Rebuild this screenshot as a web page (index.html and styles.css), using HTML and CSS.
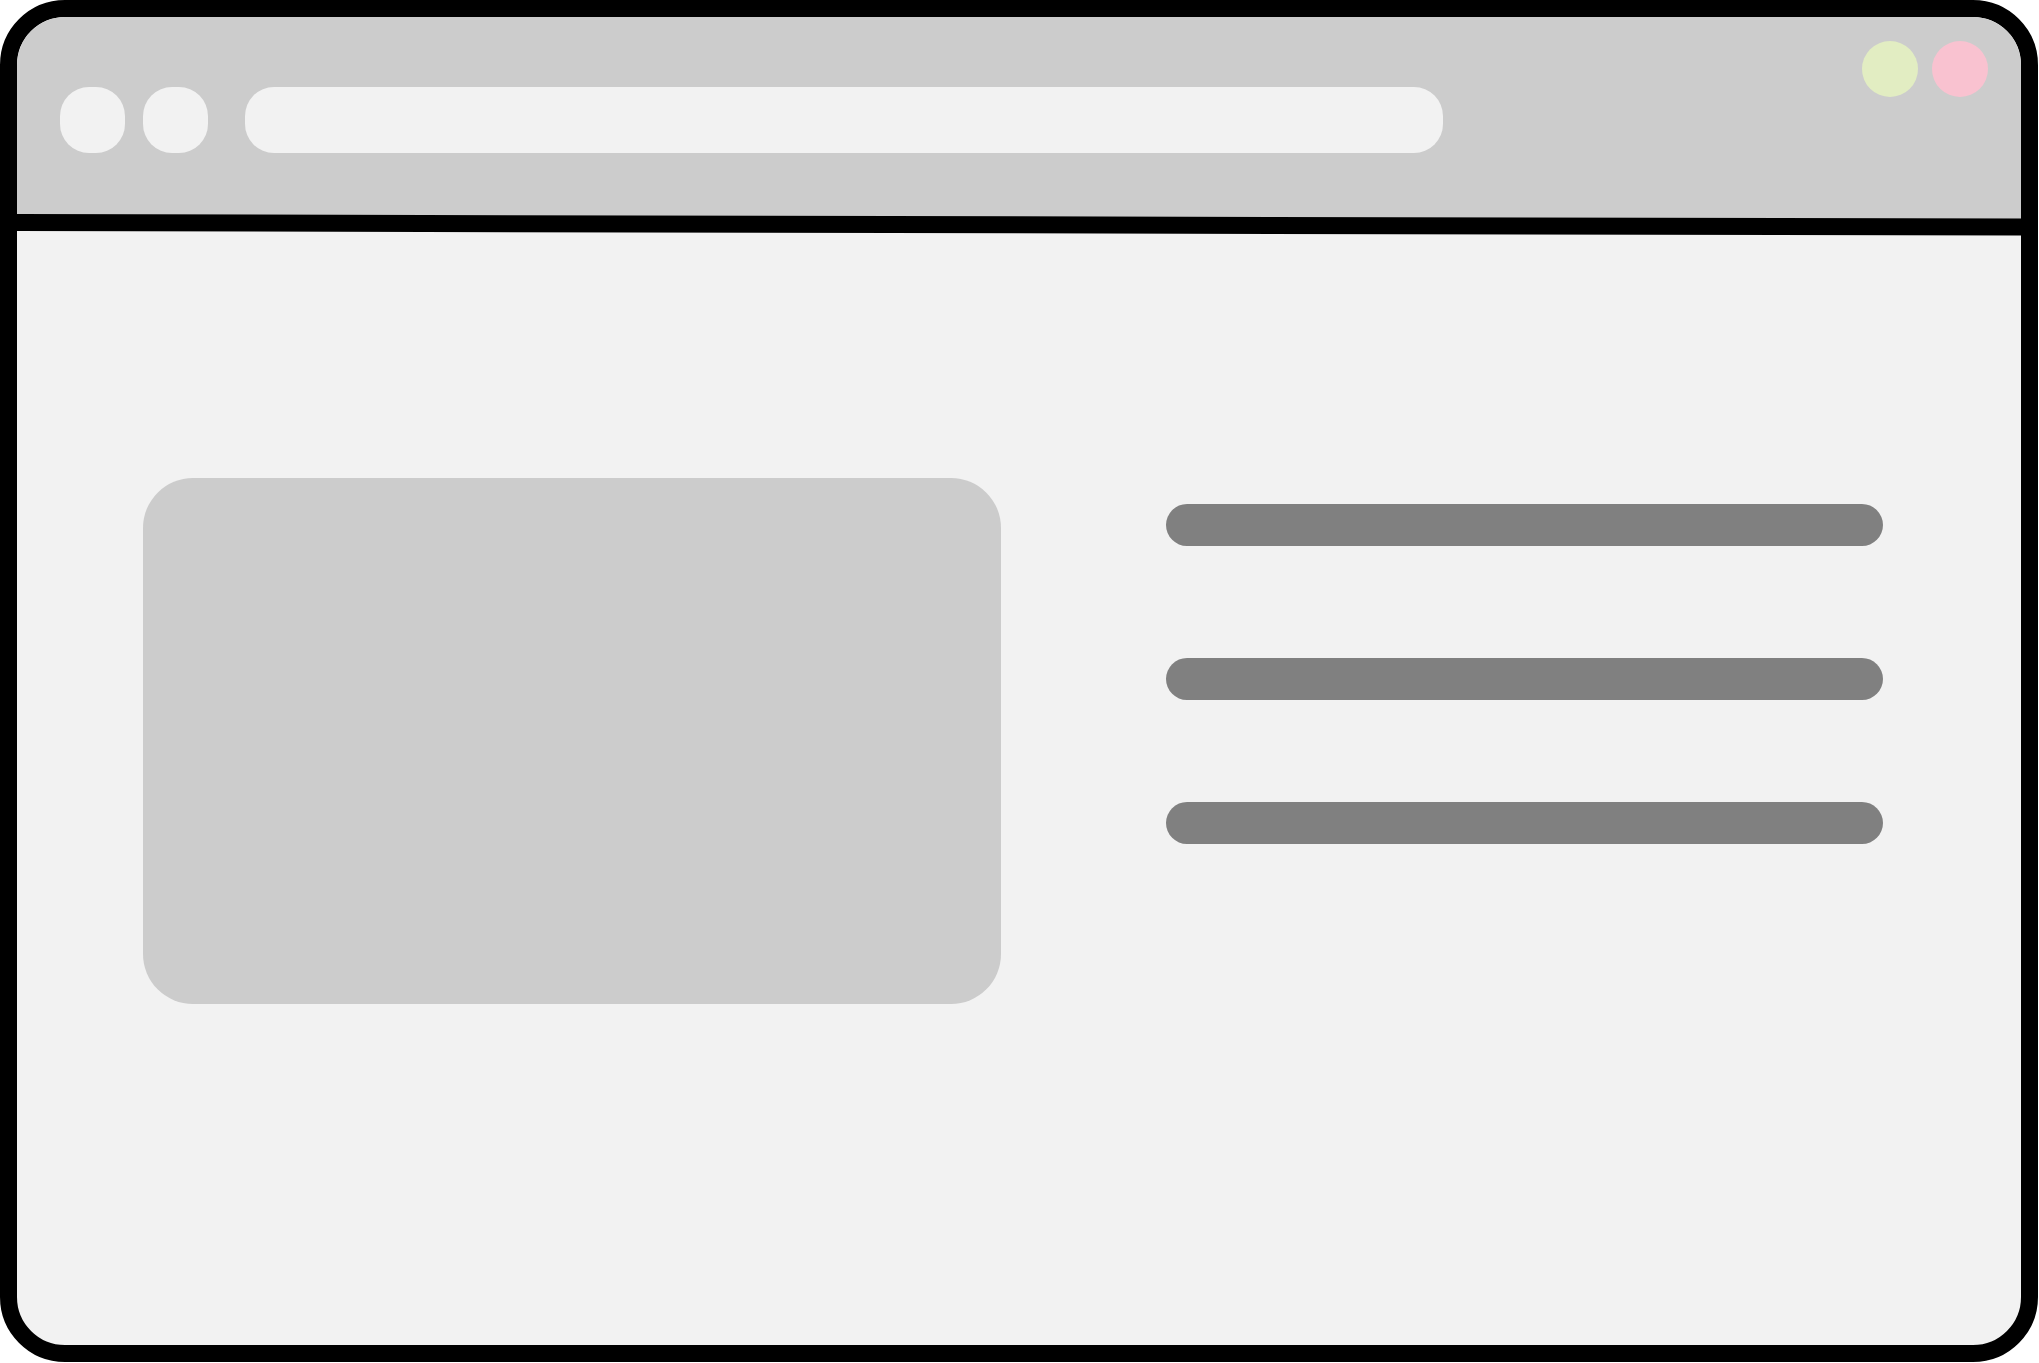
FILE: index.html
```html
<!DOCTYPE html>
<html lang="en">
<head>
  <meta charset="utf-8">
  <meta name="viewport" content="width=device-width, initial-scale=1">
  <link rel="stylesheet" href="styles.css">
</head>
<body>
  <div class="window">
    <header class="toolbar">
      <nav class="history">
        <button class="nav-button" type="button" aria-label="Back"></button>
        <button class="nav-button" type="button" aria-label="Forward"></button>
      </nav>
      <input class="address" type="text" aria-label="Address">
      <div class="controls">
        <button class="control control-minimize" type="button" aria-label="Minimize"></button>
        <button class="control control-close" type="button" aria-label="Close"></button>
      </div>
    </header>
    <svg class="divider" viewBox="0 0 2004 22" preserveAspectRatio="none" aria-hidden="true">
      <path class="divider-above" d="M0 0H2004V12H0Z"/>
      <path d="M0 0L2004 4.6V21.6L0 17Z"/>
    </svg>
    <main class="content">
      <div class="picture"></div>
      <div class="lines">
        <div class="line line-lead"></div>
        <div class="line"></div>
        <div class="line"></div>
      </div>
    </main>
  </div>
</body>
</html>
```

FILE: styles.css
```css
* {
  box-sizing: border-box;
}

body {
  display: flex;
  min-height: 100vh;
  margin: 0;
  padding: 0 1px 1px 0;
  background: #fff;
  font-family: "Liberation Sans", sans-serif;
}

.window {
  display: flex;
  flex: 1;
  flex-direction: column;
  overflow: hidden;
  border: 17px solid #000;
  border-radius: 65px;
  background: #f2f2f2;
}

.toolbar {
  display: flex;
  align-items: flex-start;
  padding: 24px 33px 61px 43px;
  background: #ccc;
}

.history {
  display: flex;
  gap: 18px;
  padding: 46px 37px 0 0;
}

.nav-button,
.address {
  height: 66px;
  padding: 0;
  border: 0;
  border-radius: 29px;
  background: #f2f2f2;
}

.nav-button {
  width: 65px;
}

.address {
  flex: 1197 1 0;
  min-width: 0;
  margin-top: 46px;
  font: 28px "Liberation Sans", sans-serif;
  text-indent: 28px;
}

.controls {
  display: flex;
  flex: 545 1 0;
  justify-content: flex-end;
  gap: 14px;
}

.control {
  width: 56px;
  height: 56px;
  padding: 0;
  border: 0;
  border-radius: 50%;
}

.control-minimize {
  background: #e2edc2;
}

.control-close {
  background: #f9c2d0;
}

.divider {
  display: block;
  width: 100%;
  height: 22px;
}

.divider-above {
  fill: #ccc;
}

.content {
  display: grid;
  flex: 1;
  grid-template-columns: 857fr 717fr;
  column-gap: 165px;
  align-items: start;
  padding: 242px 138px 64px 126px;
}

.picture {
  aspect-ratio: 857 / 526;
  border-radius: 50px;
  background: #ccc;
}

.lines {
  display: grid;
  gap: 102px;
  padding-top: 26px;
}

.line {
  height: 42px;
  border-radius: 21px;
  background: #808080;
}

.line-lead {
  margin-bottom: 10px;
}
```
